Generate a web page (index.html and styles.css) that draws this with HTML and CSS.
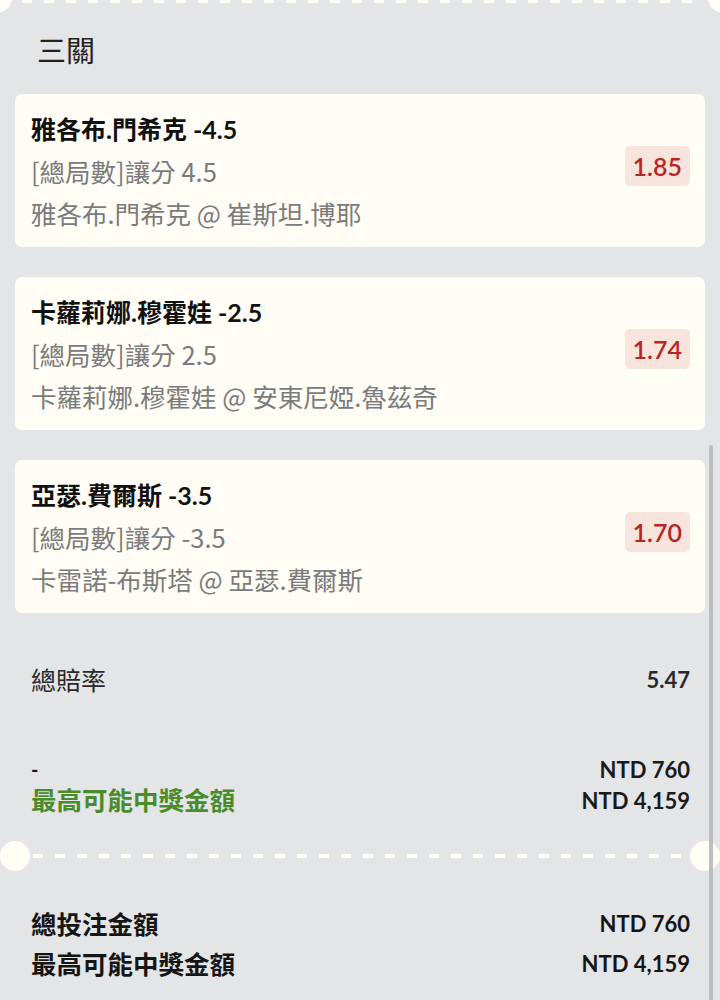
FILE: index.html
```html
<!DOCTYPE html>
<html lang="zh-Hant">
<head>
  <meta charset="UTF-8" />
  <meta name="viewport" content="width=device-width, initial-scale=1.0" />
  <title>投注單</title>
  <link rel="stylesheet" href="styles.css">
</head>
<body>
  <div class="slip">
    <div class="edge-top">
      <span class="notch notch-tl"></span>
      <span class="notch notch-tr"></span>
    </div>

    <h2 class="slip-title">三關</h2>

    <div class="legs">
      <div class="leg">
        <div class="leg-info">
          <div class="leg-name">雅各布.門希克 -4.5</div>
          <div class="leg-sub">[總局數]讓分 4.5</div>
          <div class="leg-sub">雅各布.門希克 @ 崔斯坦.博耶</div>
        </div>
        <span class="odds">1.85</span>
      </div>
      <div class="leg">
        <div class="leg-info">
          <div class="leg-name">卡蘿莉娜.穆霍娃 -2.5</div>
          <div class="leg-sub">[總局數]讓分 2.5</div>
          <div class="leg-sub">卡蘿莉娜.穆霍娃 @ 安東尼婭.魯茲奇</div>
        </div>
        <span class="odds">1.74</span>
      </div>
      <div class="leg">
        <div class="leg-info">
          <div class="leg-name">亞瑟.費爾斯 -3.5</div>
          <div class="leg-sub">[總局數]讓分 -3.5</div>
          <div class="leg-sub">卡雷諾-布斯塔 @ 亞瑟.費爾斯</div>
        </div>
        <span class="odds">1.70</span>
      </div>
    </div>

    <div class="row total-odds">
      <span>總賠率</span>
      <span class="num">5.47</span>
    </div>

    <div class="stake">
      <div class="row">
        <span class="dash">-</span>
        <span class="num">NTD 760</span>
      </div>
      <div class="row win">
        <span>最高可能中獎金額</span>
        <span class="num">NTD 4,159</span>
      </div>
    </div>

    <div class="tear">
      <span class="notch notch-l"></span>
      <span class="tear-line"></span>
      <span class="notch notch-r"></span>
    </div>

    <div class="summary">
      <div class="row">
        <span>總投注金額</span>
        <span class="num">NTD 760</span>
      </div>
      <div class="row">
        <span>最高可能中獎金額</span>
        <span class="num">NTD 4,159</span>
      </div>
    </div>
  </div>
  <div class="scrollbar"></div>
</body>
</html>
```

FILE: styles.css
```css
body {
  margin: 0;
  background: #e4e5e7;
  font-family: "Lato", "Noto Sans CJK TC", sans-serif;
  color: #1a1a1a;
}
.slip {
  position: relative;
  min-height: 1000px;
  overflow: hidden;
}
.edge-top {
  height: 3px;
  margin: 0 20px 0 22px;
  background: repeating-linear-gradient(to right, #fffdf4 0 10px, transparent 10px 22px);
}
.notch {
  position: absolute;
  width: 30px;
  height: 30px;
  border-radius: 50%;
  background: #fffdf4;
}
.notch-tl {
  left: -18px;
  top: -17px;
}
.notch-tr {
  right: -18px;
  top: -17px;
}
.slip-title {
  margin: 29px 0 0 37px;
  font-family: "Noto Sans CJK TC", sans-serif;
  font-size: 29px;
  font-weight: 400;
  line-height: 34px;
  color: #222;
}
.legs {
  display: flex;
  flex-direction: column;
  gap: 30px;
  margin: 28px 15px 0 15px;
}
.leg {
  display: flex;
  align-items: center;
  justify-content: space-between;
  height: 153px;
  box-sizing: border-box;
  padding: 1px 15px 0 16px;
  background: #fffdf6;
  border-radius: 7px;
}
.leg-name {
  font-size: 25px;
  font-weight: 700;
  line-height: 42px;
  color: #111;
}
.leg-sub {
  font-family: "Noto Sans CJK TC", sans-serif;
  font-size: 25.5px;
  line-height: 42px;
  color: #7b7b7b;
}
.odds {
  padding: 6px 8px;
  margin-top: -10px;
  background: #f7e4dd;
  border-radius: 5px;
  color: #b8261f;
  font-size: 25px;
  font-weight: 600;
  line-height: 28px;
}
.row {
  display: flex;
  justify-content: space-between;
  align-items: center;
  padding: 0 30px 0 31px;
}
.num {
  font-weight: 700;
  font-size: 22px;
}
.total-odds {
  margin-top: 51px;
  line-height: 32px;
  font-size: 25px;
  color: #2a2a2a;
}
.stake {
  margin-top: 58px;
  line-height: 31px;
}
.stake .dash {
  font-weight: 700;
  font-size: 20px;
}
.win {
  color: #4a8b2c;
  font-size: 25.5px;
  font-weight: 700;
}
.win .num {
  color: #1a1a1a;
}
.tear {
  position: relative;
  height: 30px;
  margin-top: 25px;
  display: flex;
  align-items: center;
}
.tear-line {
  flex: 1;
  height: 4px;
  margin: 0 20px 0 33px;
  background: repeating-linear-gradient(to right, #fffdf4 0 10px, transparent 10px 22px);
}
.notch-l {
  left: 0;
  top: 0;
}
.notch-r {
  right: 0;
  top: 0;
}
.summary {
  margin-top: 33px;
  line-height: 40px;
  font-size: 25.5px;
  font-weight: 700;
  color: #151515;
}
.scrollbar {
  position: absolute;
  top: 445px;
  left: 709px;
  width: 4px;
  height: 555px;
  background: #bdbdbd;
  border-radius: 2px 2px 0 0;
}
```
